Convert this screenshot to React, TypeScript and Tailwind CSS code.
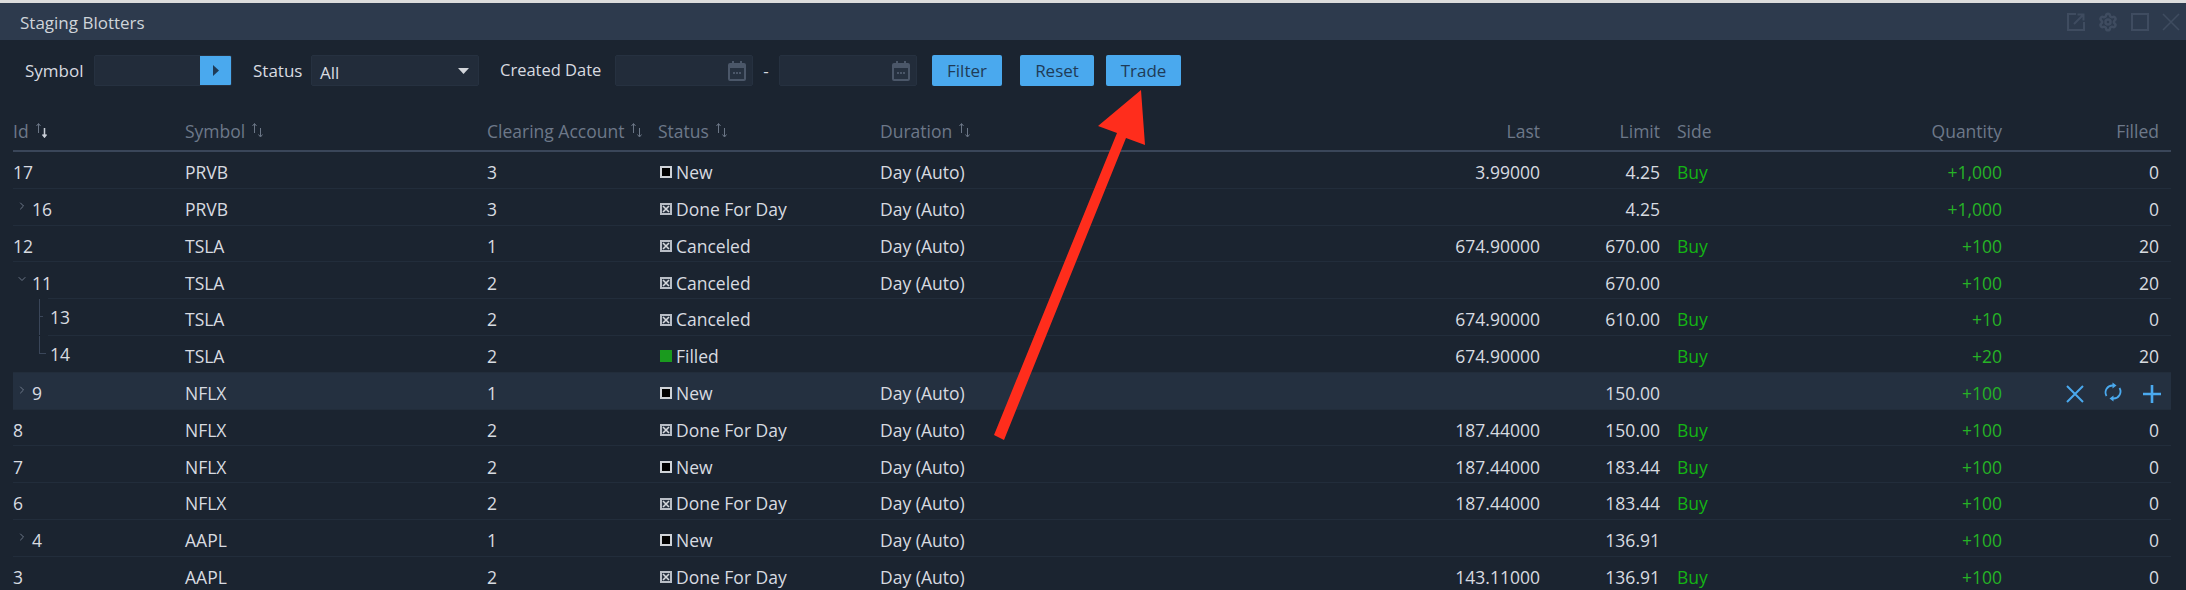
import React from 'react'
import { ChevronRight, ChevronDown, Settings } from 'lucide-react'

type Row = {
  id: string
  symbol: string
  account: string
  status: 'New' | 'Done For Day' | 'Canceled' | 'Filled'
  duration?: boolean
  last?: string
  limit?: string
  side?: boolean
  qty: string
  filled: string
  caret?: 'right' | 'down'
  child?: boolean
  inset?: boolean
  active?: boolean
}

const rows: Row[] = [
  { id: '17', symbol: 'PRVB', account: '3', status: 'New', duration: true, last: '3.99000', limit: '4.25', side: true, qty: '+1,000', filled: '0' },
  { id: '16', symbol: 'PRVB', account: '3', status: 'Done For Day', duration: true, limit: '4.25', qty: '+1,000', filled: '0', caret: 'right' },
  { id: '12', symbol: 'TSLA', account: '1', status: 'Canceled', duration: true, last: '674.90000', limit: '670.00', side: true, qty: '+100', filled: '20' },
  { id: '11', symbol: 'TSLA', account: '2', status: 'Canceled', duration: true, limit: '670.00', qty: '+100', filled: '20', caret: 'down', inset: true },
  { id: '13', symbol: 'TSLA', account: '2', status: 'Canceled', last: '674.90000', limit: '610.00', side: true, qty: '+10', filled: '0', child: true, inset: true },
  { id: '14', symbol: 'TSLA', account: '2', status: 'Filled', last: '674.90000', side: true, qty: '+20', filled: '20', child: true },
  { id: '9', symbol: 'NFLX', account: '1', status: 'New', duration: true, limit: '150.00', qty: '+100', filled: '', caret: 'right', active: true },
  { id: '8', symbol: 'NFLX', account: '2', status: 'Done For Day', duration: true, last: '187.44000', limit: '150.00', side: true, qty: '+100', filled: '0' },
  { id: '7', symbol: 'NFLX', account: '2', status: 'New', duration: true, last: '187.44000', limit: '183.44', side: true, qty: '+100', filled: '0' },
  { id: '6', symbol: 'NFLX', account: '2', status: 'Done For Day', duration: true, last: '187.44000', limit: '183.44', side: true, qty: '+100', filled: '0' },
  { id: '4', symbol: 'AAPL', account: '1', status: 'New', duration: true, limit: '136.91', qty: '+100', filled: '0', caret: 'right' },
  { id: '3', symbol: 'AAPL', account: '2', status: 'Done For Day', duration: true, last: '143.11000', limit: '136.91', side: true, qty: '+100', filled: '0' },
]

const cols = 'grid grid-cols-[172px_302px_171px_222px_200px_460px_120px_100px_242px_157px] items-center text-[17.5px]'

const SortIcon = ({ down }: { down?: boolean }) => (
  <svg width="13" height="16" viewBox="0 0 13 16" className="ml-1.5 -mt-2 inline-block">
    <path d="M3.5 11V2M1.5 4l2-2.500 2 2.500" fill="none" stroke="#6b7686" strokeWidth="1" />
    <path d="M9.500 6v8.500M7.500 12.500l2 2.500 2-2.500" fill="none" stroke={down ? '#c9ced6' : '#6b7686'} strokeWidth={down ? 1.5 : 1} />
  </svg>
)

const StatusIcon = ({ status }: { status: Row['status'] }) => {
  if (status === 'Filled') return <span className="h-[12px] w-[12px] bg-[#1a9a1e]" />
  if (status === 'New') return <span className="h-[12px] w-[12px] border-2 border-[#cfd3d8] bg-black" />
  return (
    <svg width="12" height="12" viewBox="0 0 12 12">
      <rect width="12" height="12" fill="#b9bec6" />
      <rect x="2" y="2" width="8" height="8" fill="#2a3442" />
      <path d="M3 3l6 6M9 3l-6 6" stroke="#d5d8dc" strokeWidth="1.6" />
    </svg>
  )
}

const Field = ({ className, children }: { className: string; children?: React.ReactNode }) => (
  <div className={`flex h-[31px] items-center rounded-[2px] border border-[#263140] bg-[#222c3a] ${className}`}>{children}</div>
)

const CalendarIcon = () => (
  <svg width="18" height="20" viewBox="0 0 18 20">
    <path d="M4 0h2v2h6V0h2v2h2a2 2 0 0 1 2 2v14a2 2 0 0 1-2 2H2a2 2 0 0 1-2-2V4a2 2 0 0 1 2-2h2z" fill="#4b5769" />
    <rect x="2" y="7" width="14" height="11" fill="#263140" />
    <path d="M5 12h2M8 12h2M11 12h2" stroke="#4b5769" strokeWidth="2" />
  </svg>
)

const DateField = () => (
  <Field className="w-[138px] justify-end pr-[6px]">
    <CalendarIcon />
  </Field>
)

const ToolButton = ({ label, className }: { label: string; className: string }) => (
  <button className={`h-[31px] rounded-[2px] bg-[#4aa9ee] text-[#1f3b57] ${className}`}>{label}</button>
)

const WindowIcons = () => (
  <div className="flex items-center gap-[13px] text-[#3f4c60]">
    <svg width="18" height="18" viewBox="0 0 18 18" fill="none" stroke="currentColor" strokeWidth="2">
      <path d="M9 1H1v16h16V9" />
      <path d="M7 11l9-9M10.500 1.500H16.500V7.500" />
    </svg>
    <Settings size={20} strokeWidth={3} />
    <svg width="18" height="18" viewBox="0 0 18 18" fill="none" stroke="currentColor" strokeWidth="2">
      <rect x="1" y="1" width="16" height="16" />
    </svg>
    <svg width="18" height="18" viewBox="0 0 18 18" fill="none" stroke="currentColor" strokeWidth="1.600">
      <path d="M1 1l16 16M17 1L1 17" />
    </svg>
  </div>
)

const RowActions = () => (
  <div className="absolute right-[9px] top-[3px] flex h-full items-center gap-[19px] text-[#4aa9ee]">
    <svg width="18" height="18" viewBox="0 0 18 18" fill="none" stroke="currentColor" strokeWidth="2">
      <path d="M1 1l16 16M17 1L1 17" />
    </svg>
    <svg width="20" height="20" viewBox="0 0 20 20" fill="none" stroke="currentColor" strokeWidth="1.800" className="-mt-1">
      <path d="M3.500 14A7 7 0 0 1 10 3.500" />
      <path d="M16.500 6A7 7 0 0 1 10 16.500" />
      <path d="M9.500 0.500l4 3-4 3z" fill="currentColor" stroke="none" />
      <path d="M10.500 13.500l-4 3 4 3z" fill="currentColor" stroke="none" />
    </svg>
    <svg width="20" height="20" viewBox="0 0 20 20" fill="none" stroke="currentColor" strokeWidth="2.600">
      <path d="M10 1v18M1 10h18" />
    </svg>
  </div>
)

export default function App() {
  return (
    <div className="relative h-[590px] w-[2186px] overflow-hidden bg-[#1b2430] text-[17px] font-medium text-[#d8dbe0] [font-family:'Open_Sans',sans-serif]">
      <div className="h-[3px] bg-[#dcdcdc]" />

      {/* Title bar */}
      <div className="flex h-[37px] items-center justify-between bg-[#2d3a4d] pl-[20px] pr-[6px]">
        <span className="mt-[2px] text-[#cfd4da]">Staging Blotters</span>
        <WindowIcons />
      </div>

      {/* Filters */}
      <div className="flex h-[75px] items-start pl-[25px] pt-[15px]">
        <div className="flex h-[31px] items-center">
          <span className="w-[69px]">Symbol</span>
          <Field className="w-[138px] justify-end overflow-hidden">
            <div className="flex h-full w-[31px] items-center justify-center bg-[#4aa9ee]">
              <svg width="6" height="11" viewBox="0 0 6 11"><path d="M0 0l6 5.500-6 5.500z" fill="#1f3b57" /></svg>
            </div>
          </Field>
          <span className="ml-[21px] w-[58px]">Status</span>
          <Field className="w-[168px] justify-between px-[8px]">
            <span className="mt-1">All</span>
            <svg width="11" height="6" viewBox="0 0 11 6" className="mr-[1px]"><path d="M0 0h11L5.500 6z" fill="#d3d6db" /></svg>
          </Field>
          <span className="ml-[21px] w-[115px] text-[16.5px]">Created Date</span>
          <DateField />
          <span className="w-[26px] text-center">-</span>
          <DateField />
          <ToolButton label="Filter" className="ml-[15px] w-[70px]" />
          <ToolButton label="Reset" className="ml-[18px] w-[74px]" />
          <ToolButton label="Trade" className="ml-[12px] w-[75px]" />
        </div>
      </div>

      {/* Table */}
      <div className="ml-[13px] w-[2158px]">
        <div className={`${cols} h-[37px] border-b-2 border-[#3a4659] pb-[2px] text-[#6d7889]`}>
          <span>Id<SortIcon down /></span>
          <span>Symbol<SortIcon /></span>
          <span>Clearing Account<SortIcon /></span>
          <span>Status<SortIcon /></span>
          <span>Duration<SortIcon /></span>
          <span className="text-right">Last</span>
          <span className="text-right">Limit</span>
          <span className="pl-[17px]">Side</span>
          <span className="text-right">Quantity</span>
          <span className="text-right">Filled</span>
        </div>

        {rows.map((row) => (
          <div
            key={row.id}
            className={`${cols} relative h-[36.8px] border-b pt-[5px] ${row.inset ? 'border-transparent' : 'border-[#222d3b]'} ${row.active ? 'bg-[#243040]' : ''}`}
          >
            {row.inset && <span className="absolute bottom-[-1px] left-[35px] right-0 h-px bg-[#222d3b]" />}
            <span className={`flex items-center ${row.child ? '-mt-1 pl-[37px]' : row.caret ? 'pl-[19px]' : ''}`}>
              {row.caret === 'right' && <ChevronRight size={12} className="absolute left-[3px] top-[11px] text-[#6d7889]" />}
              {row.caret === 'down' && <ChevronDown size={12} className="absolute left-[3px] top-[11px] text-[#6d7889]" />}
              {row.child && (
                <span className={`absolute left-[26px] top-0 w-[7px] border-l border-[#3a4659] ${row.id === '13' ? 'h-full' : 'h-[18px] border-b'}`} />
              )}
              {row.id === '13' && <span className="absolute left-[26px] top-[17px] h-px w-[4px] bg-[#3a4659]" />}
              {row.id}
            </span>
            <span>{row.symbol}</span>
            <span>{row.account}</span>
            <span className="flex items-center gap-[4px] pl-[2px]">
              <StatusIcon status={row.status} />
              {row.status}
            </span>
            <span>{row.duration ? 'Day (Auto)' : ''}</span>
            <span className="text-right">{row.last}</span>
            <span className="text-right">{row.limit}</span>
            <span className="pl-[17px] text-[#14b414]">{row.side ? 'Buy' : ''}</span>
            <span className="text-right text-[#26b326]">{row.qty}</span>
            <span className="text-right">{row.filled}</span>
            {row.active && <RowActions />}
          </div>
        ))}
      </div>

      {/* Annotation arrow */}
      <svg width="2186" height="590" className="pointer-events-none absolute left-0 top-0">
        <path d="M1141 90L1098 126L1117 133L994 435L1004 440L1126 138L1145 145Z" fill="#ff2d1c" />
      </svg>
    </div>
  )
}
